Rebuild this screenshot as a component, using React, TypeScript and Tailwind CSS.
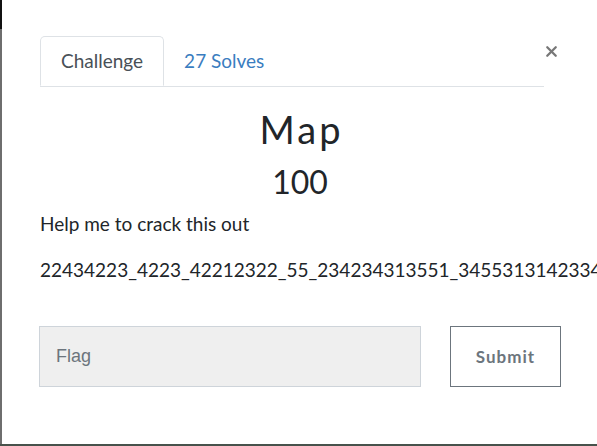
import { X } from 'lucide-react';

const FLAG_TEXT = '22434223_4223_42212322_55_234234313551_345531314233453124';

export default function App() {
  return (
    <div className="w-[597px] h-[446px] overflow-hidden bg-white flex flex-col font-['Lato',sans-serif] text-[#212529]">
      <div className="flex flex-1 min-h-0">
        {/* backdrop edge on the left */}
        <div className="w-[2px] flex flex-col shrink-0">
          <div className="h-[29px] bg-[#111]" />
          <div className="flex-1 bg-[#6e6e6e]" />
        </div>

        <div className="flex-1 min-w-0 pl-[38px] pt-[36px]">
          <div className="flex items-start">
            <ul className="w-[504px] flex border-b border-[#dee2e6] text-[19px]">
              <li className="-mb-px h-[50px] px-[20px] flex items-center border border-[#dee2e6] border-b-white rounded-t-[5px] text-[#495057]">
                Challenge
              </li>
              <li className="h-[50px] px-[20px] flex items-center text-[#3a7dc0]">27 Solves</li>
            </ul>
            <button className="-ml-[1px] mt-[7px] text-[#777]">
              <X className="w-[17px] h-[17px]" strokeWidth={3.2} />
            </button>
          </div>

          <div className="w-[520px] text-center mt-[18px]">
            <h2 className="text-[38px] leading-[48px] font-normal tracking-[3px] pl-[3px]">Map</h2>
            <h3 className="text-[32px] leading-[40px] font-normal mt-[9px]">100</h3>
          </div>

          <p className="text-[19px] mt-[8px] leading-[28px]">Help me to crack this out</p>
          <p className="text-[19px] mt-[18px] leading-[28px] whitespace-nowrap">{FLAG_TEXT}</p>

          <div className="flex mt-[42px] gap-[29px]">
            <div className="w-[382px] h-[61px] -ml-px bg-[#efefef] border border-[#ced4da] flex items-center pl-[16px] font-['Liberation_Sans',sans-serif] text-[18px] text-[#6c757d]">
              Flag
            </div>
            <button className="w-[111px] h-[61px] border border-[#6c757d] bg-white text-[#6c757d] font-bold text-[17px] tracking-[1px]">
              Submit
            </button>
          </div>
        </div>
      </div>
      <div className="h-[2px] bg-[#47524b] shrink-0" />
    </div>
  );
}
